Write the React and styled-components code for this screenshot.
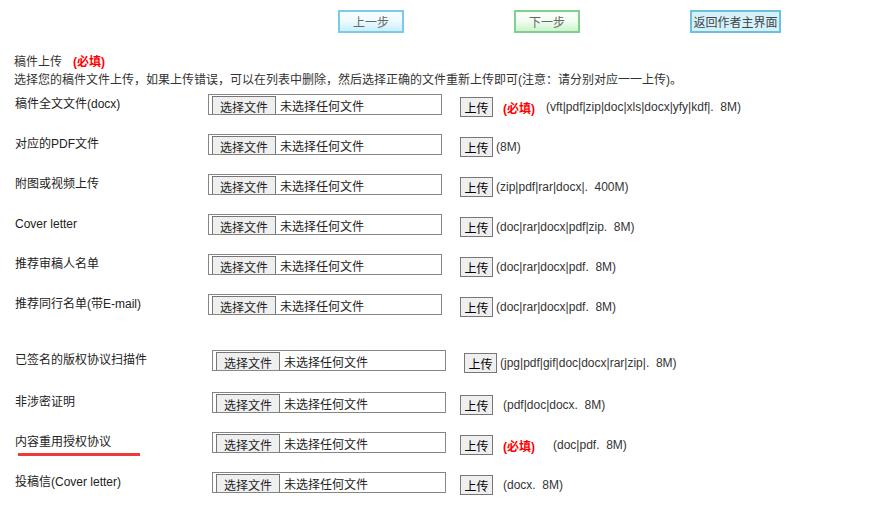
import styled, { createGlobalStyle, css } from 'styled-components';

const GlobalStyle = createGlobalStyle`
  html, body {
    margin: 0;
    padding: 0;
    background: #fff;
  }
  body {
    font-family: 'Liberation Sans', 'Noto Sans CJK SC', sans-serif;
    font-size: 12px;
    color: #333;
  }
`;

const Page = styled.div`
  width: 885px;
  height: 513px;
  overflow: hidden;
`;

const Toolbar = styled.div`
  display: flex;
  gap: 110px;
  padding: 10px 0 0 338px;
`;

const variants = {
  blue: css`
    border-color: #7ccbe4;
    background: linear-gradient(#f7fdff, #f0fbff 45%, #c9eefb);
    width: 66px;
  `,
  green: css`
    border-color: #7fd08f;
    background: linear-gradient(#fbfffb, #f2fdf2 45%, #cdf3cd);
    width: 66px;
  `,
  home: css`
    border-color: #6cc0dc;
    background: #d3f2fb;
    width: 91px;
    color: #444;
  `,
};

const NavButton = styled.button`
  box-sizing: border-box;
  height: 23px;
  padding: 0;
  border: 2px solid;
  font-family: inherit;
  font-size: 12px;
  color: #666;
  white-space: nowrap;
  cursor: pointer;
  ${({ $variant }) => variants[$variant]}
`;

const Intro = styled.div`
  margin: 20px 0 0 14px;
  line-height: 18px;
`;

const Required = styled.span`
  color: #f00;
  font-weight: bold;
  margin-left: ${({ $gap }) => $gap ?? 0}px;
  margin-right: ${({ $after }) => $after ?? 0}px;
`;

const Section = styled.div`
  margin-top: ${({ $top }) => $top}px;
`;

const Row = styled.div`
  display: flex;
  align-items: flex-start;
  height: 20px;
  margin-top: ${({ $gap }) => $gap ?? 20}px;
  padding-left: 15px;
  &:first-child {
    margin-top: 0;
  }
`;

const Label = styled.div`
  position: relative;
  flex: 0 0 ${({ $width }) => $width}px;
  line-height: 20px;
  color: #222;

  ${({ $marked }) =>
    $marked &&
    css`
      &::after {
        content: '';
        position: absolute;
        left: 3px;
        top: 21px;
        width: 122px;
        height: 3px;
        background: #ef3a3a;
      }
    `}
`;

const FileBox = styled.label`
  display: flex;
  align-items: flex-start;
  box-sizing: border-box;
  width: 234px;
  height: 21px;
  padding: 1px 0 0 3px;
  border: 1px solid #858585;
  overflow: hidden;
  cursor: pointer;

  input {
    display: none;
  }
`;

const ChooseButton = styled.span`
  flex: none;
  height: 24px;
  padding: 0 7px;
  border: 1px solid #777;
  border-bottom: none;
  background: #efefef;
  line-height: 23px;
  color: #222;
`;

const FileName = styled.span`
  margin-left: 4px;
  line-height: 23px;
  color: #222;
`;

const Actions = styled.div`
  display: flex;
  align-items: center;
  height: 20px;
  margin: 3px 0 0 ${({ $offset }) => $offset}px;
  white-space: pre;
`;

const UploadButton = styled.button`
  box-sizing: border-box;
  width: 33px;
  height: 20px;
  padding: 0;
  margin-right: ${({ $after }) => $after}px;
  border: 1px solid #777;
  background: #efefef;
  font-family: inherit;
  font-size: 12px;
  color: #000;
  cursor: pointer;
`;

const Hint = styled.span`
  color: #333;
`;

const FilePicker = () => (
  <FileBox>
    <input type="file" />
    <ChooseButton>选择文件</ChooseButton>
    <FileName>未选择任何文件</FileName>
  </FileBox>
);

const UploadRow = ({ label, labelWidth, offset = 18, after = 3, required, requiredAfter = 11, hint, gap, marked }) => (
  <Row $gap={gap}>
    <Label $width={labelWidth} $marked={marked}>
      {label}
    </Label>
    <FilePicker />
    <Actions $offset={offset}>
      <UploadButton $after={after}>上传</UploadButton>
      {required && <Required $after={requiredAfter}>(必填)</Required>}
      <Hint>{hint}</Hint>
    </Actions>
  </Row>
);

const firstGroup = [
  { label: '稿件全文文件(docx)', required: true, after: 10, hint: '(vft|pdf|zip|doc|xls|docx|yfy|kdf|.  8M)' },
  { label: '对应的PDF文件', hint: '(8M)' },
  { label: '附图或视频上传', hint: '(zip|pdf|rar|docx|.  400M)' },
  { label: 'Cover letter', hint: '(doc|rar|docx|pdf|zip.  8M)' },
  { label: '推荐审稿人名单', hint: '(doc|rar|docx|pdf.  8M)' },
  { label: '推荐同行名单(带E-mail)', hint: '(doc|rar|docx|pdf.  8M)' },
];

const secondGroup = [
  { label: '已签名的版权协议扫描件', hint: '(jpg|pdf|gif|doc|docx|rar|zip|.  8M)' },
  { label: '非涉密证明', offset: 14, after: 10, gap: 22, hint: '(pdf|doc|docx.  8M)' },
  { label: '内容重用授权协议', offset: 14, after: 10, required: true, requiredAfter: 18, marked: true, hint: '(doc|pdf.  8M)' },
  { label: '投稿信(Cover letter)', offset: 14, after: 10, hint: '(docx.  8M)' },
];

const App = () => {
  return (
    <Page>
      <GlobalStyle />
      <Toolbar>
        <NavButton $variant="blue">上一步</NavButton>
        <NavButton $variant="green">下一步</NavButton>
        <NavButton $variant="home">返回作者主界面</NavButton>
      </Toolbar>
      <Intro>
        <div>
          稿件上传<Required $gap={11}>(必填)</Required>
        </div>
        <div>
          选择您的稿件文件上传，如果上传错误，可以在列表中删除，然后选择正确的文件重新上传即可(注意：请分别对应一一上传)。
        </div>
      </Intro>
      <Section $top={5}>
        {firstGroup.map((row) => (
          <UploadRow key={row.label} labelWidth={193} {...row} />
        ))}
      </Section>
      <Section $top={36}>
        {secondGroup.map((row) => (
          <UploadRow key={row.label} labelWidth={197} {...row} />
        ))}
      </Section>
    </Page>
  );
};

export default App;
